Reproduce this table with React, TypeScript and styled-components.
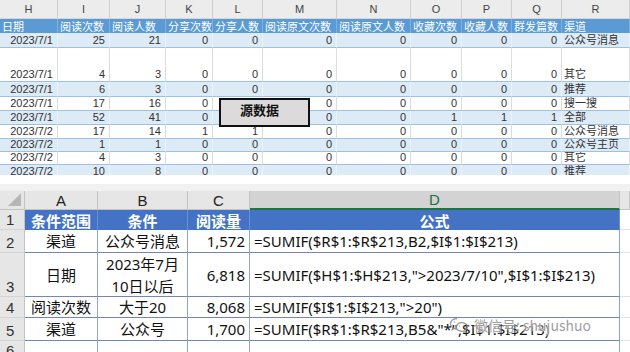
import React from 'react';
import styled, { createGlobalStyle } from 'styled-components';

const GlobalStyle = createGlobalStyle`
  html, body {
    margin: 0;
    padding: 0;
    background: #fff;
  }
`;

// 上半部分：源数据表
const topCols = [58, 52, 56, 47, 50, 74, 74, 51, 50, 50, 68];
const topLetters = ['H', 'I', 'J', 'K', 'L', 'M', 'N', 'O', 'P', 'Q', 'R'];
const topHeads = ['日期', '阅读次数', '阅读人数', '分享次数', '分享人数', '阅读原文次数', '阅读原文人数', '收藏次数', '收藏人数', '群发篇数', '渠道'];

type TopRow = { h: number; cells: (string | number)[] };

const topRows: TopRow[] = [
  { h: 15, cells: ['2023/7/1', 25, 21, 0, 0, 0, 0, 0, 0, 0, '公众号消息'] },
  { h: 34, cells: ['2023/7/1', 4, 3, 0, 0, 0, 0, 0, 0, 0, '其它'] },
  { h: 15, cells: ['2023/7/1', 6, 3, 0, 0, 0, 0, 0, 0, 0, '推荐'] },
  { h: 14, cells: ['2023/7/1', 17, 16, 0, 0, 0, 0, 0, 0, 0, '搜一搜'] },
  { h: 14, cells: ['2023/7/1', 52, 41, 0, 0, 0, 0, 1, 1, 1, '全部'] },
  { h: 14, cells: ['2023/7/2', 17, 14, 1, 1, 0, 0, 0, 0, 0, '公众号消息'] },
  { h: 13, cells: ['2023/7/2', 1, 1, 0, 0, 0, 0, 0, 0, 0, '公众号主页'] },
  { h: 13, cells: ['2023/7/2', 4, 3, 0, 0, 0, 0, 0, 0, 0, '其它'] },
  { h: 14, cells: ['2023/7/2', 10, 8, 0, 0, 0, 0, 0, 0, 0, '推荐'] },
];

// 下半部分：SUMIF 示例
const bottomCols = [25, 73, 90, 62, 370, 10];

type BottomRow = { n: number; h: number; a: React.ReactNode; b: React.ReactNode; c: string; d: string };

const bottomRows: BottomRow[] = [
  { n: 2, h: 23, a: '渠道', b: '公众号消息', c: '1,572', d: '=SUMIF($R$1:$R$213,B2,$I$1:$I$213)' },
  { n: 3, h: 44, a: '日期', b: <>2023年7月<br />10日以后</>, c: '6,818', d: '=SUMIF($H$1:$H$213,">2023/7/10",$I$1:$I$213)' },
  { n: 4, h: 21, a: '阅读次数', b: '大于20', c: '8,068', d: '=SUMIF($I$1:$I$213,">20")' },
  { n: 5, h: 23, a: '渠道', b: '公众号', c: '1,700', d: '=SUMIF($R$1:$R$213,B5&"*",$I$1:$I$213)' },
];

const Page = styled.div`
  position: relative;
  width: 630px;
  height: 352px;
  overflow: hidden;
  display: flex;
  flex-direction: column;
  background: #fff;
`;

const TopSheet = styled.div<{ $cols: string; $rows: string }>`
  display: grid;
  grid-template-columns: ${p => p.$cols};
  grid-template-rows: ${p => p.$rows};
  height: 175px;
  flex-shrink: 0;
  overflow: hidden;
  font-family: 'Liberation Sans', 'Noto Sans CJK SC', sans-serif;
  font-size: 11px;
  color: #333;
`;

const LetterCell = styled.div`
  display: flex;
  align-items: center;
  justify-content: center;
  background: #ececec;
  border-right: 1px solid #cfcfcf;
  border-bottom: 1px solid #d6d6d6;
  color: #444;
  font-size: 11px;
`;

const HeadCell = styled.div`
  display: flex;
  align-items: center;
  padding-left: 2px;
  background: #5b9bd5;
  color: #fff;
  border-right: 1px solid #7fb0de;
  white-space: nowrap;
  overflow: hidden;
`;

const DataCell = styled.div<{ $shade: boolean; $left: boolean }>`
  display: flex;
  align-items: flex-end;
  justify-content: ${p => (p.$left ? 'flex-start' : 'flex-end')};
  padding: ${p => (p.$left ? '0 0 0 2px' : '0 4px 0 0')};
  background: ${p => (p.$shade ? '#ddebf7' : '#fff')};
  border-right: 1px solid ${p => (p.$shade ? '#eaf2fa' : '#dcdcdc')};
  border-bottom: 1px solid #9bc2e6;
  line-height: 13px;
  white-space: nowrap;
  overflow: hidden;
`;

const SourceLabel = styled.div`
  position: absolute;
  left: 219px;
  top: 98px;
  width: 91px;
  height: 29px;
  box-sizing: border-box;
  border: 2px solid #111;
  background: #dcdada;
  padding: 2px 0 0 19px;
  font-family: 'Noto Sans CJK SC', sans-serif;
  font-weight: 700;
  font-size: 13px;
  line-height: 16px;
  color: #111;
`;

const Gap = styled.div`
  height: 9px;
  flex-shrink: 0;
`;

const Band = styled.div`
  height: 7px;
  flex-shrink: 0;
  background: #f1f1f1;
`;

const BottomSheet = styled.div<{ $cols: string; $rows: string }>`
  display: grid;
  grid-template-columns: ${p => p.$cols};
  grid-template-rows: ${p => p.$rows};
  flex: 1;
  font-family: 'Noto Sans', 'Noto Sans CJK SC', sans-serif;
  font-size: 15px;
  color: #111;
`;

const Corner = styled.div`
  position: relative;
  background: #e6e6e6;
  border-right: 1px solid #c4c4c4;
  border-bottom: 1px solid #c4c4c4;

  &::after {
    content: '';
    position: absolute;
    right: 3px;
    bottom: 3px;
    border-left: 13px solid transparent;
    border-bottom: 13px solid #b7b7b7;
  }
`;

const ColHead = styled.div<{ $active?: boolean }>`
  display: flex;
  align-items: center;
  justify-content: center;
  background: ${p => (p.$active ? '#d3d3d3' : '#e6e6e6')};
  color: ${p => (p.$active ? '#1e6f45' : '#222')};
  border-right: 1px solid #c4c4c4;
  border-bottom: ${p => (p.$active ? '2px solid #217346' : '1px solid #c4c4c4')};
  font-family: 'Liberation Sans', sans-serif;
  font-size: 15px;
`;

const RowNum = styled.div`
  display: flex;
  align-items: flex-end;
  padding-left: 6px;
  background: #e6e6e6;
  color: #333;
  border-right: 1px solid #c4c4c4;
  border-bottom: 1px solid #d4d4d4;
  font-family: 'Liberation Sans', sans-serif;
  font-size: 15px;
  line-height: 19px;
`;

const TitleCell = styled.div`
  display: flex;
  align-items: center;
  justify-content: center;
  background: #4472c4;
  color: #fff;
  font-weight: 700;
  border-right: 1px solid #6a8fd0;
`;

const BodyCell = styled.div<{ $align: 'left' | 'center' | 'right' }>`
  display: flex;
  align-items: center;
  justify-content: ${p => (p.$align === 'left' ? 'flex-start' : p.$align === 'right' ? 'flex-end' : 'center')};
  text-align: center;
  padding: 0 4px;
  border-right: 1px solid #8ea4cf;
  border-bottom: 1px solid #6f88b8;
  line-height: 22px;
  white-space: nowrap;
`;

const Blank = styled.div<{ $line?: boolean }>`
  border-bottom: 1px solid ${p => (p.$line ? '#e2e2e2' : 'transparent')};
  background: #fff;
`;

const Watermark = styled.div`
  position: absolute;
  left: 449px;
  top: 315px;
  display: flex;
  align-items: center;
  gap: 5px;
  font-family: 'Noto Sans CJK SC', sans-serif;
  font-size: 14px;
  color: rgba(140, 140, 140, 0.85);
  text-shadow: 0 0 2px #fff, 0 0 2px #fff;
  pointer-events: none;
`;

function WeChatIcon() {
  return (
    <svg width="20" height="16" viewBox="0 0 20 16" fill="none" stroke="rgba(140,140,140,0.9)" strokeWidth="1.3">
      <path d="M8 1.5c-3.6 0-6.5 2.3-6.5 5.2 0 1.6.9 3 2.3 4l-.6 2 2.3-1.2c.8.2 1.6.4 2.5.4" />
      <path d="M12.8 5.6c-3.1 0-5.6 2-5.6 4.4s2.5 4.4 5.6 4.4c.7 0 1.3-.1 1.9-.3l1.9 1-.5-1.7c1.4-.8 2.3-2 2.3-3.4 0-2.4-2.5-4.4-5.6-4.4z" />
      <circle cx="5.6" cy="5" r=".7" fill="rgba(140,140,140,0.9)" stroke="none" />
      <circle cx="10.6" cy="9" r=".6" fill="rgba(140,140,140,0.9)" stroke="none" />
      <circle cx="14.8" cy="9" r=".6" fill="rgba(140,140,140,0.9)" stroke="none" />
    </svg>
  );
}

export default function App() {
  const topColTpl = topCols.map(w => `${w}px`).join(' ');
  const topRowTpl = ['19px', '14px', ...topRows.map(r => `${r.h}px`)].join(' ');
  const bottomColTpl = bottomCols.map(w => `${w}px`).join(' ');
  const bottomRowTpl = ['19px', '20px', ...bottomRows.map(r => `${r.h}px`), '20px'].join(' ');

  return (
    <>
      <GlobalStyle />
      <Page>
        <TopSheet $cols={topColTpl} $rows={topRowTpl}>
          {topLetters.map(l => (
            <LetterCell key={l}>{l}</LetterCell>
          ))}
          {topHeads.map(h => (
            <HeadCell key={h}>{h}</HeadCell>
          ))}
          {topRows.map((row, ri) =>
            row.cells.map((c, ci) => (
              <DataCell key={`${ri}-${ci}`} $shade={ri % 2 === 0} $left={ci === row.cells.length - 1}>
                {c}
              </DataCell>
            ))
          )}
        </TopSheet>
        <SourceLabel>源数据</SourceLabel>

        <Gap />
        <Band />

        <BottomSheet $cols={bottomColTpl} $rows={bottomRowTpl}>
          <Corner />
          <ColHead>A</ColHead>
          <ColHead>B</ColHead>
          <ColHead>C</ColHead>
          <ColHead $active>D</ColHead>
          <ColHead />

          <RowNum>1</RowNum>
          <TitleCell>条件范围</TitleCell>
          <TitleCell>条件</TitleCell>
          <TitleCell>阅读量</TitleCell>
          <TitleCell>公式</TitleCell>
          <Blank $line />

          {bottomRows.map(r => (
            <React.Fragment key={r.n}>
              <RowNum>{r.n}</RowNum>
              <BodyCell $align="center">{r.a}</BodyCell>
              <BodyCell $align="center">{r.b}</BodyCell>
              <BodyCell $align="right">{r.c}</BodyCell>
              <BodyCell $align="left">{r.d}</BodyCell>
              <Blank $line />
            </React.Fragment>
          ))}

          <RowNum>6</RowNum>
          <BodyCell $align="center" />
          <BodyCell $align="center" />
          <BodyCell $align="center" />
          <BodyCell $align="left" />
          <Blank />
        </BottomSheet>

        <Watermark>
          <WeChatIcon />
          <span>微信号: shujushuo</span>
        </Watermark>
      </Page>
    </>
  );
}
